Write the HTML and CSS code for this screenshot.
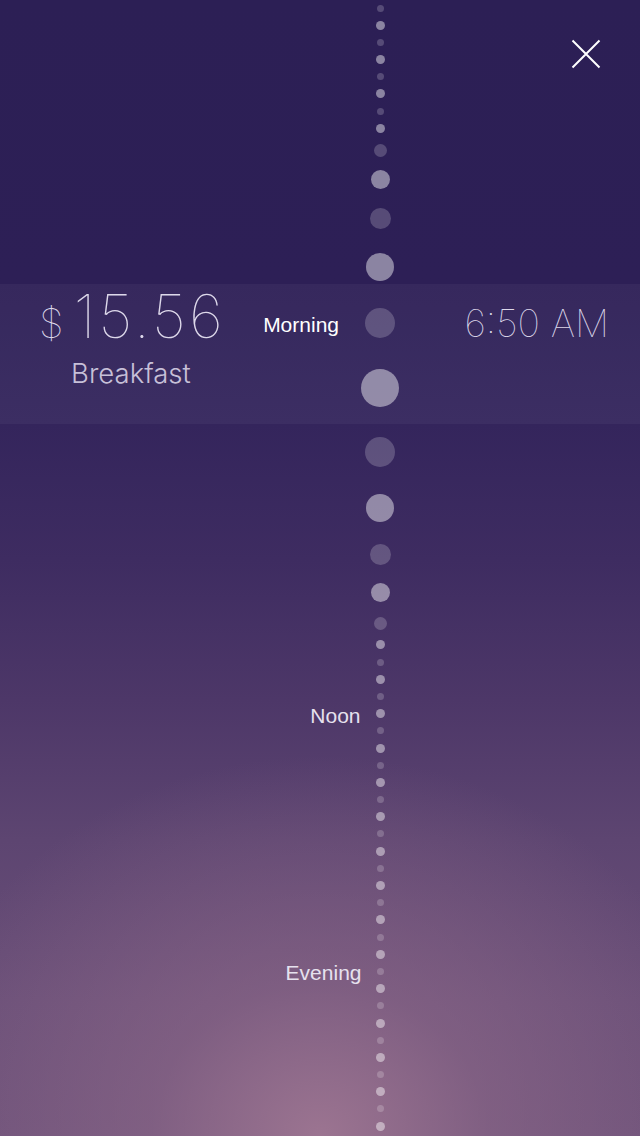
FILE: index.html
```html
<!DOCTYPE html>
<html lang="en">
<head>
<meta charset="utf-8">
<title>Expense timeline</title>
<link rel="stylesheet" href="styles.css">
</head>
<body>
<div class="screen">
  <button class="close" aria-label="Close">
    <svg width="30" height="30" viewBox="0 0 30 30"><path d="M1.5 1.5 L28.5 28.5 M28.5 1.5 L1.5 28.5" stroke="#fff" stroke-width="2" fill="none"/></svg>
  </button>

  <div class="band">
    <div class="expense">
      <div class="amount"><span class="currency">$</span><span class="value">15.56</span></div>
      <div class="category">Breakfast</div>
    </div>
    <div class="time">6:50 AM</div>
  </div>

  <div class="timeline">
    <div class="track">
      <div class="dot sm dim"></div>
      <div class="dot lg"></div>
      <div class="dot sm dim"></div>
      <div class="dot lg"></div>
      <div class="dot sm dim"></div>
      <div class="dot lg"></div>
      <div class="dot sm dim"></div>
      <div class="dot lg"></div>
    </div>

    <div class="dot dim c1"></div>
    <div class="dot c2"></div>
    <div class="dot dim c3"></div>
    <div class="dot c4"></div>
    <div class="dot dim c5"><span class="label label-active">Morning</span></div>
    <div class="dot c6"></div>
    <div class="dot dim c7"></div>
    <div class="dot c8"></div>
    <div class="dot dim c9"></div>
    <div class="dot c10"></div>
    <div class="dot dim c11"></div>

    <div class="track track-bottom">
      <div class="dot lg"></div>
      <div class="dot sm dim"></div>
      <div class="dot lg"></div>
      <div class="dot sm dim"></div>
      <div class="dot lg"><span class="label">Noon</span></div>
      <div class="dot sm dim"></div>
      <div class="dot lg"></div>
      <div class="dot sm dim"></div>
      <div class="dot lg"></div>
      <div class="dot sm dim"></div>
      <div class="dot lg"></div>
      <div class="dot sm dim"></div>
      <div class="dot lg"></div>
      <div class="dot sm dim"></div>
      <div class="dot lg"></div>
      <div class="dot sm dim"></div>
      <div class="dot lg"></div>
      <div class="dot sm dim"></div>
      <div class="dot lg"></div>
      <div class="dot sm dim"><span class="label">Evening</span></div>
      <div class="dot lg"></div>
      <div class="dot sm dim"></div>
      <div class="dot lg"></div>
      <div class="dot sm dim"></div>
      <div class="dot lg"></div>
      <div class="dot sm dim"></div>
      <div class="dot lg"></div>
      <div class="dot sm dim"></div>
      <div class="dot lg"></div>
      <div class="dot sm dim"></div>
    </div>
  </div>
</div>
</body>
</html>
```

FILE: styles.css
```css
html, body {
  margin: 0;
  padding: 0;
}

body {
  background: #2c1f55;
  font-family: "Liberation Sans", Arial, sans-serif;
}

.screen {
  position: relative;
  width: 640px;
  height: 1136px;
  overflow: hidden;
  background:
    radial-gradient(ellipse 420px 380px at 50% 100%, rgba(158, 118, 146, 0.95) 0%, rgba(140, 104, 136, 0.6) 40%, rgba(120, 90, 128, 0) 100%),
    linear-gradient(to bottom, #2c1f55 0px, #2d1f56 284px, #34255c 424px, #3e2c61 560px, #4d3768 700px, #5d4571 840px, #6a4f78 1000px, #6e527a 1136px);
}

.close {
  position: absolute;
  top: 39px;
  right: 39px;
  width: 30px;
  height: 30px;
  padding: 0;
  border: 0;
  background: none;
  display: flex;
}

.band {
  position: absolute;
  top: 284px;
  left: 0;
  right: 0;
  height: 140px;
  background: rgba(255, 255, 255, 0.045);
  display: flex;
  justify-content: space-between;
  align-items: flex-start;
  box-sizing: border-box;
  padding: 0 31px 0 39px;
}

.expense {
  display: flex;
  flex-direction: column;
  align-items: center;
}

.amount {
  display: flex;
  align-items: baseline;
  gap: 10px;
  color: #ddd8ea;
  font-family: Inter, "Liberation Sans", sans-serif;
  font-weight: 100;
  height: 64px;
  line-height: 64px;
}

.currency {
  font-size: 40px;
}

.value {
  font-size: 60px;
  letter-spacing: 3px;
  margin-right: -3px;
}

.category {
  margin-top: 9px;
  font-family: Inter, "Liberation Sans", sans-serif;
  font-weight: 300;
  font-size: 27.5px;
  line-height: 32px;
  color: #c7c0d8;
}

.time {
  margin-top: 17px;
  font-family: Inter, "Liberation Sans", sans-serif;
  font-weight: 100;
  font-size: 38px;
  line-height: 44px;
  color: #ddd8ea;
}

.timeline {
  position: relative;
  z-index: 1;
  width: 40px;
  margin-left: 360px;
  padding-top: 4.5px;
  display: flex;
  flex-direction: column;
  align-items: center;
}

.track {
  display: flex;
  flex-direction: column;
  align-items: center;
  gap: 9.2px;
}

.track-bottom {
  margin-top: 10px;
}

.dot {
  position: relative;
  flex: none;
  border-radius: 50%;
  background: rgba(255, 255, 255, 0.45);
}

.dot.dim {
  background: rgba(255, 255, 255, 0.2);
}

.dot.lg { width: 9px; height: 9px; }
.dot.sm { width: 7px; height: 7px; }

.c1  { width: 13px; height: 13px; margin-top: 11.3px; }
.c2  { width: 19px; height: 19px; margin-top: 13.3px; }
.c3  { width: 21px; height: 21px; margin-top: 19px; }
.c4  { width: 28px; height: 28px; margin-top: 23.5px; }
.c5  { width: 30px; height: 30px; margin-top: 26.7px; }
.c6  { width: 38px; height: 38px; margin-top: 31px; }
.c7  { width: 30px; height: 30px; margin-top: 30px; }
.c8  { width: 28px; height: 28px; margin-top: 27.3px; }
.c9  { width: 21px; height: 21px; margin-top: 22.5px; }
.c10 { width: 19px; height: 19px; margin-top: 18px; }
.c11 { width: 13px; height: 13px; margin-top: 15px; }

.label {
  position: absolute;
  right: calc(100% + 15px);
  top: 50%;
  transform: translateY(calc(-50% + 2px));
  white-space: nowrap;
  font-size: 21px;
  line-height: 24px;
  color: #e6e1ee;
}

.label-active {
  right: calc(100% + 26px);
  color: #ffffff;
}
```
